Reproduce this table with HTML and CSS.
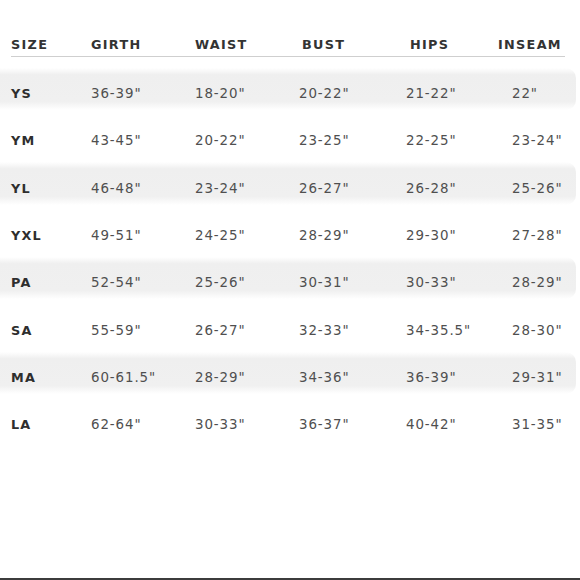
FILE: index.html
```html
<!DOCTYPE html>
<html>
<head>
<meta charset="utf-8">
<link rel="stylesheet" href="styles.css">
</head>
<body>
<div class="page">
  <div class="chart">
    <div class="head">
      <div class="hc">SIZE</div>
      <div class="hc">GIRTH</div>
      <div class="hc">WAIST</div>
      <div class="hc hc-bust">BUST</div>
      <div class="hc hc-hips">HIPS</div>
      <div class="hc">INSEAM</div>
    </div>
    <div class="row band"><div class="sz">YS</div><div class="v">36-39"</div><div class="v">18-20"</div><div class="v">20-22"</div><div class="v">21-22"</div><div class="v v-ins">22"</div></div>
    <div class="row"><div class="sz">YM</div><div class="v">43-45"</div><div class="v">20-22"</div><div class="v">23-25"</div><div class="v">22-25"</div><div class="v v-ins">23-24"</div></div>
    <div class="row band"><div class="sz">YL</div><div class="v">46-48"</div><div class="v">23-24"</div><div class="v">26-27"</div><div class="v">26-28"</div><div class="v v-ins">25-26"</div></div>
    <div class="row"><div class="sz">YXL</div><div class="v">49-51"</div><div class="v">24-25"</div><div class="v">28-29"</div><div class="v">29-30"</div><div class="v v-ins">27-28"</div></div>
    <div class="row band"><div class="sz">PA</div><div class="v">52-54"</div><div class="v">25-26"</div><div class="v">30-31"</div><div class="v">30-33"</div><div class="v v-ins">28-29"</div></div>
    <div class="row"><div class="sz">SA</div><div class="v">55-59"</div><div class="v">26-27"</div><div class="v">32-33"</div><div class="v">34-35.5"</div><div class="v v-ins">28-30"</div></div>
    <div class="row band"><div class="sz">MA</div><div class="v">60-61.5"</div><div class="v">28-29"</div><div class="v">34-36"</div><div class="v">36-39"</div><div class="v v-ins">29-31"</div></div>
    <div class="row"><div class="sz">LA</div><div class="v">62-64"</div><div class="v">30-33"</div><div class="v">36-37"</div><div class="v">40-42"</div><div class="v v-ins">31-35"</div></div>
  </div>
</div>
</body>
</html>
```
FILE: styles.css
```css
html, body {
  margin: 0;
  padding: 0;
  background: #ffffff;
}
.page {
  width: 580px;
  height: 580px;
  box-sizing: border-box;
  border-bottom: 2px solid #3c3c3c;
  padding-top: 34px;
  font-family: "DejaVu Sans", "Liberation Sans", sans-serif;
}
.chart {
  display: flex;
  flex-direction: column;
}
.head, .row {
  display: grid;
  grid-template-columns: 80px 104px 104px 107px 92px 1fr;
  padding-left: 11px;
}
.head {
  height: 22px;
  margin-right: 15px;
  margin-left: 11px;
  padding-left: 0;
  border-bottom: 1.5px solid #cfcfcf;
  margin-bottom: 10.8px;
}
.hc {
  font-size: 12.8px;
  line-height: 22px;
  font-weight: bold;
  letter-spacing: 1.3px;
  color: #333333;
}
.hc-bust { margin-left: 3px; }
.hc-hips { margin-left: 4px; }
.row {
  height: 47.33px;
  align-items: center;
  position: relative;
  z-index: 0;
}
.band::before {
  content: "";
  position: absolute;
  left: 0;
  right: 4px;
  top: 0;
  bottom: 5px;
  background: linear-gradient(180deg, rgba(240,240,240,0) 0%, #efefef 16%, #f0f0f0 80%, rgba(240,240,240,0) 100%);
  border-radius: 0 10px 10px 0;
  z-index: -1;
}
.sz {
  font-size: 12.8px;
  font-weight: bold;
  letter-spacing: 1.2px;
  color: #2e2e2e;
  margin-top: 4px;
}
.v {
  font-size: 13.4px;
  letter-spacing: 0.9px;
  color: #4f4f4f;
  margin-top: 4px;
}
.v-ins { margin-left: 14px; }
```
